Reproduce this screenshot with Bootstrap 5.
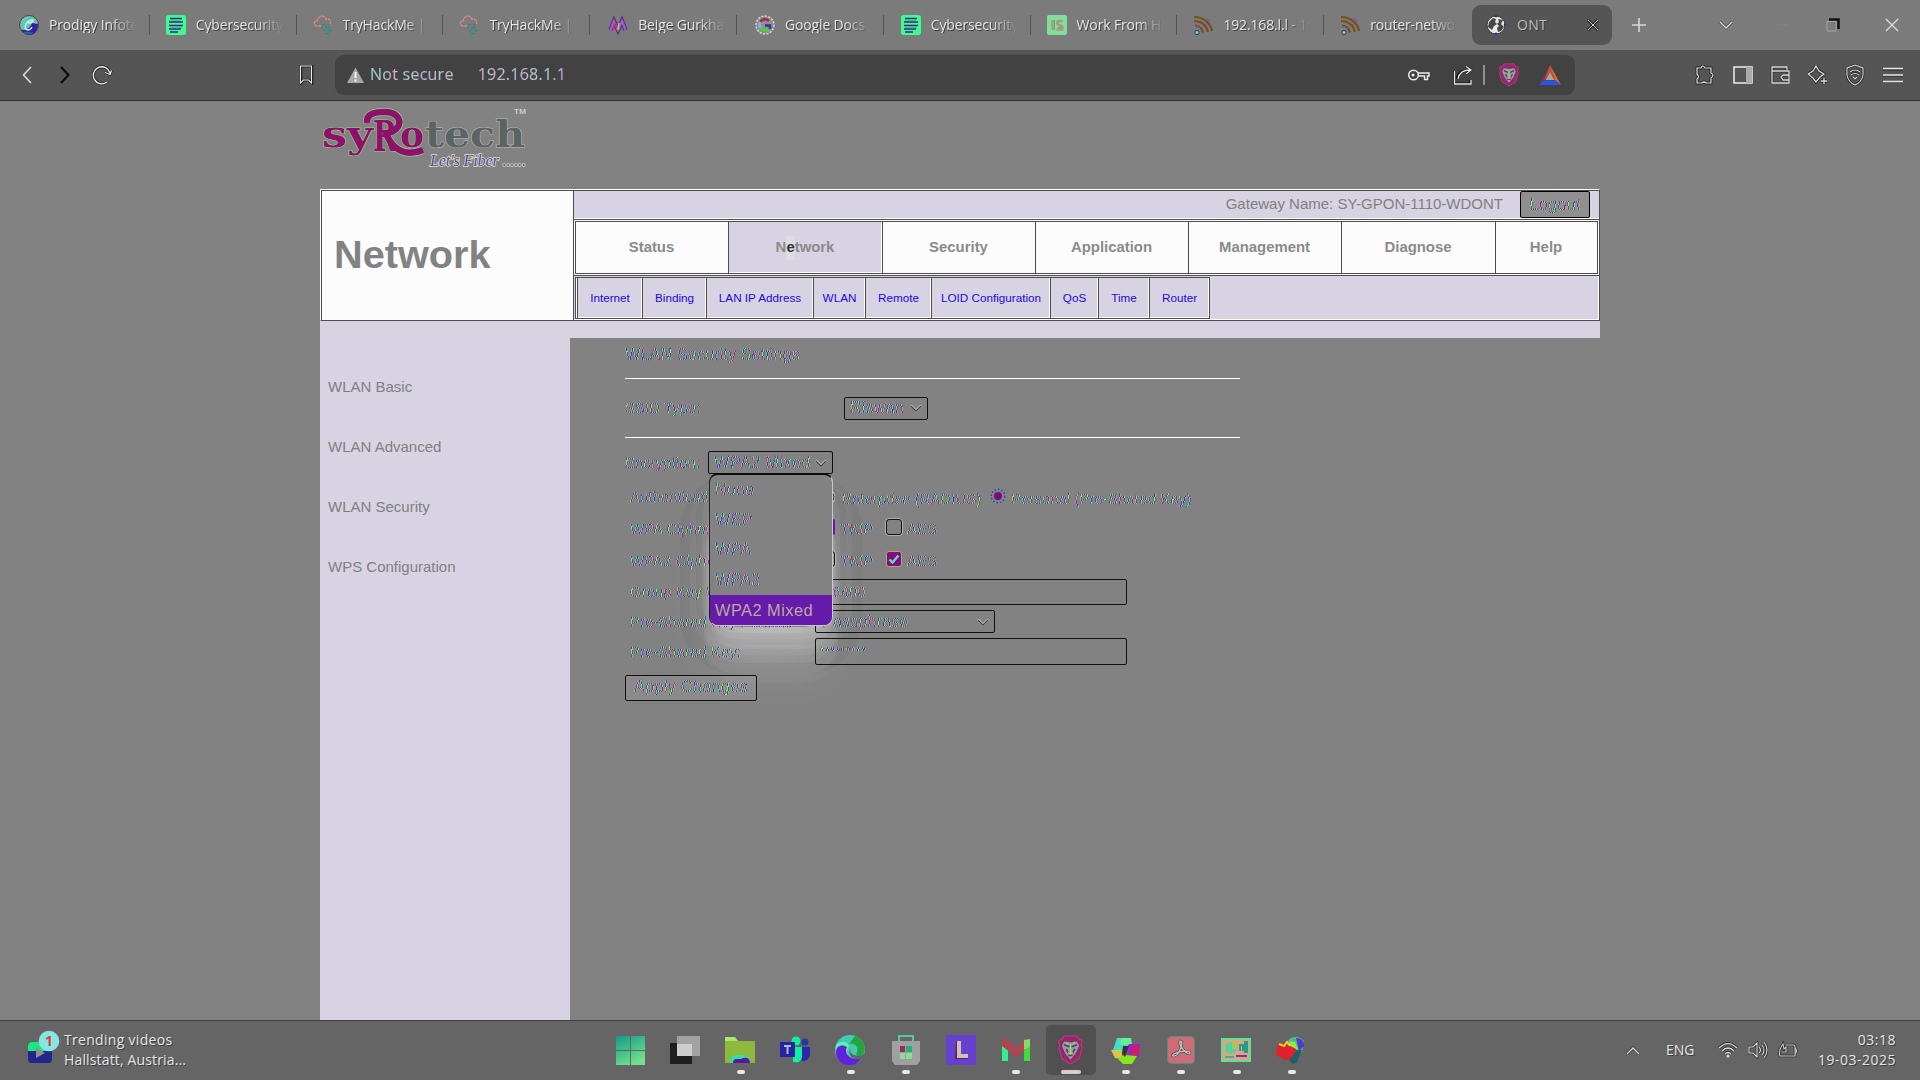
<!DOCTYPE html>
<html lang="en">
<head>
<meta charset="utf-8">
<title>ONT</title>
<link href="https://cdn.jsdelivr.net/npm/bootstrap@5.3.0/dist/css/bootstrap.min.css" rel="stylesheet">
<style>
:root{--bg:#828282;--lav:#d7d3e2;--ln:#4d4d4d}
body{width:1920px;height:1080px;overflow:hidden;background:var(--bg);font-family:"Liberation Sans",Arial,sans-serif;font-size:15px;line-height:1.2;color:#808080}
svg{display:block;flex:none}
.ui{font-family:"Open Sans","Noto Sans",sans-serif;color:#e6e6e6;text-shadow:1px 1px 0 #3c3c3c}
.tabs{height:50px;background:#7b7b7b;padding-left:3px}
.tab-i{width:146.8px;height:50px;padding-left:16px;gap:10px;flex:none;position:relative}
.tab-i::after{content:"";position:absolute;right:0;top:15px;width:1px;height:20px;background:#555}
.tab-i.last-i::after{display:none}
.tab-t{width:87px;overflow:hidden;white-space:nowrap;font-size:14px;letter-spacing:-.15px;-webkit-mask-image:linear-gradient(90deg,#000 68%,transparent)}
.tab-on{width:140px;height:40px;border-radius:9px;background:#555;padding:0 13px 0 14px;margin-left:1px}
.tools{height:50px;background:#555}
.urlbar{width:1240px;height:40px;border-radius:9px;background:#424242;margin-left:21px;padding:0 13px 0 12px}
.url-t{font-size:16px;letter-spacing:.25px;text-shadow:none;background:repeating-linear-gradient(90deg,#f09a9a 0 1px,#9ad0e8 1px 2px,#a9df9f 2px 3px,#a9a4ff 3px 4px);-webkit-background-clip:text;color:transparent;-webkit-text-stroke:.2px transparent}
.page{height:920px;border-top:1px solid #303030;padding-left:320px}
.w-page{width:1280px}
.hdr{height:132px;border:1px solid #fcfcfc;border-bottom:1px solid var(--ln);border-right:1px solid var(--ln)}
.ttl{width:253px;background:#fcfcfc;border:1px solid var(--ln);border-bottom:0;padding:0 0 1px 12px;font-size:39.7px;font-weight:700;color:#828282}
.top-r{height:29px;background:var(--lav);border-top:1px solid var(--ln);border-bottom:1px solid #fff}
.top-r .gw{margin-right:17px;padding-bottom:2px}
.lo{width:70px;height:27px;border:1px solid #000;border-radius:2px;background:#8f8f8f;margin-right:9px;font-size:16.6px}
.nav-r{height:57px;background:#fcfcfc;border:1px solid var(--ln);border-width:1px 0;padding:1px}
.nav-in{border:1px solid var(--ln);height:53px}
.nv{border-right:1px solid var(--ln);font-weight:700;font-size:14.9px;color:#8a8a8a;padding:1px 1px 0 0}
.nv:last-child{border-right:0}
.nv.act{background:var(--lav);box-shadow:inset -1px -1px #fff}
.hl{background:#dcdce2;color:#333;padding:3px 0}
.sub-r{height:44px;background:var(--lav);box-shadow:inset 0 -1px #fff,inset -1px 0 #fff;padding:1px 0 1px 1px}
.sub-in{background:#fff;border:1px solid var(--ln);padding-left:1px;height:42px}
.sb{border-right:1px solid var(--ln);background:var(--lav);box-shadow:inset -1px -1px #fff;font-size:11.7px;color:#2008e8}
.sb:first-child{border-left:1px solid var(--ln)}
.sb:last-child{border-right:0}
.band{height:17px;background:var(--lav)}
.side{width:250px;height:682px;background:var(--lav);padding:19px 8px}
.side div{height:60px;line-height:60px}
.form-a{padding-left:55px}
.iri{background:repeating-linear-gradient(104deg,#a8108c 0 1px,#36e6b4 1px 2px,#4c22c4 2px 3px,#aeea50 3px 4px,#0f7464 4px 5px,#e88ab0 5px 6px);-webkit-background-clip:text;background-clip:text;color:transparent;-webkit-text-stroke:.35px transparent;white-space:nowrap}
.big-t{font-size:16.4px}
.fr{display:flex;align-items:center;padding-left:5px}
.bx{border:1px solid #101010;border-radius:2px;display:flex;align-items:center;justify-content:space-between;padding:0 5px}
.lb{width:185px;flex:none}
.dd{position:absolute;left:1px;top:22px;width:124px;height:153px;background:#828282;border-radius:9px;border:1px solid #c9c9c9;border-top:2px solid #0c0c0c;border-left-color:#222;overflow:hidden;z-index:3}
.dd div{height:30px;line-height:29px;padding-left:5px}
.dd .sel{background:#651aab;color:#b9ab9e;height:32px;line-height:30px}
.glow{position:absolute;left:6px;top:42px;width:114px;height:134px;border-radius:24px;z-index:0;box-shadow:0 0 0 6px rgba(255,255,255,.08),0 0 0 12px rgba(255,255,255,.05),0 0 0 18px rgba(0,0,0,.025),0 4px 0 24px rgba(255,255,255,.035),0 14px 0 34px rgba(0,0,0,.03),0 18px 0 4px rgba(255,255,255,.07),0 28px 0 8px rgba(255,255,255,.05),0 38px 0 10px rgba(255,255,255,.05),0 48px 0 8px rgba(255,255,255,.03),0 20px 24px -4px rgba(255,255,255,.26),0 40px 50px 6px rgba(255,255,255,.12)}
.rel-z{position:relative;z-index:1}
.cb{width:16px;height:16px;border:1px solid #111;border-radius:3px;box-shadow:0 0 0 .5px #ddd}
.taskb{height:60px;background:#656565;border-top:1px solid #3e3e3e;padding-bottom:1px}
.ti{width:55.1px;height:58px;position:relative}
.ti.on::before{content:"";position:absolute;left:3px;top:4px;width:50px;height:50px;border-radius:5px;background:#505050}
.ti svg{position:relative}
.dot::after{content:"";position:absolute;left:24px;bottom:5px;width:8px;height:4px;border-radius:2px;background:#e8e8e8}
.ti.on::after{left:18px;width:20px;background:#d8cccc}
</style>
<script src="https://cdn.jsdelivr.net/npm/bootstrap@5.3.0/dist/js/bootstrap.bundle.min.js"></script>
</head>
<body>
<svg width="0" height="0" class="position-absolute"><defs>
<symbol id="doc" viewBox="0 0 20 20"><rect width="20" height="20" rx="2.5" fill="#3dfd8e"/><path d="M4 3.5h12M3 7h14M3 10.500h14M3 14h12M4 17h8" stroke="#35238e" stroke-width="1.3"/><path d="M4 5.200h11M4 12.300h12" stroke="#6f8f7c" stroke-width=".8"/></symbol>
<symbol id="thm" viewBox="0 0 20 20"><path d="M8 11H3.500C0 10 1 6 4 6 5 0 12 0 13 4c4-1 6 3 3.500 6" fill="none" stroke="#e88680" stroke-width="1.300" stroke-dasharray="3 .8"/><path d="M9 9.500h3M14 9.500h3M8 12.500h2M12 12.500h5M10 15.500h3M15 15.500h4M12 18.500h4" stroke="#2a8c8c" stroke-width="1.700"/></symbol>
<symbol id="rss" viewBox="0 0 20 20"><g fill="none" stroke="#77501b" stroke-width="2.200"><path d="M1 2c10 0 17 7 18 14"/><path d="M1 6c7 0 12 4 14 11"/><path d="M2 10.500c4 0 7 3 8 7"/></g><path d="M4 11l3 1M12 9l2 3M14 3l3 4" stroke="#7b3fd0" stroke-width="1"/><circle cx="4" cy="17.500" r="2.200" fill="#3fd080" stroke="#3030a0"/><circle cx="4" cy="17.500" r="1" fill="#e8c040"/></symbol>
<symbol id="lion" viewBox="0 0 24 28"><path d="M6 1h12l2 3 3 1-1 5 1 2-3 10-8 5-8-5L1 12l1-2-1-5 3-1z" fill="#93286f" stroke="#c23a78" stroke-width="1"/><path d="M6 6l6 1 6-1 2 4-3 7-5 6-5-6-3-7z" fill="#87a2a4"/><path d="M6 9l5 2M18 9l-5 2M8 13l2 4M16 13l-2 4M10 19h4" fill="none" stroke="#732b70" stroke-width="1.500"/><path d="M12 8v9M8 7l2 2M16 7l-2 2M10 16l2 2 2-2" fill="none" stroke="#b6d85c" stroke-width="1"/></symbol>
<symbol id="chev" viewBox="0 0 12 8"><path d="M1 1.500l5 5 5-5" fill="none" stroke="#ddd" stroke-width="2"/><path d="M1 2l5 5 5-5" fill="none" stroke="#444" stroke-width="1.400"/></symbol>
</defs></svg>

<header class="tabs d-flex align-items-center ui">
 <div class="tab-i d-flex align-items-center"><svg width="20" height="20" viewBox="0 0 20 20"><circle cx="10" cy="10" r="9.500" fill="#63c7b4" stroke="#54433e"/><path d="M2 14c4 3 9-1 11-6l6 1c0 14-14 13-17 5z" fill="#3420a0"/><path d="M4 17c4-1 8 1 11 0-3 3-8 3-11 0z" fill="#1e6f9e"/><path d="M13 5c-7 1-9 10-4 10 2 0 3-1 4-3M9 8c6 0 6-4 3-3" fill="none" stroke="#cfeee6" stroke-width="1.400"/></svg><span class="tab-t">Prodigy Infotech</span></div>
 <div class="tab-i d-flex align-items-center"><svg width="20" height="20"><use href="#doc"/></svg><span class="tab-t">Cybersecurity</span></div>
 <div class="tab-i d-flex align-items-center"><svg width="20" height="20"><use href="#thm"/></svg><span class="tab-t">TryHackMe |</span></div>
 <div class="tab-i d-flex align-items-center"><svg width="20" height="20"><use href="#thm"/></svg><span class="tab-t">TryHackMe | S</span></div>
 <div class="tab-i d-flex align-items-center" style="padding-left:18px"><svg width="20" height="20" viewBox="0 0 20 20"><path d="M2.500 15L6 6l4 9 4-9 3.500 9" fill="none" stroke="#5b2f6e" stroke-width="4.500"/><path d="M2.500 15L6 6l4 9 4-9 3.500 9" fill="none" stroke="#9a5be6" stroke-width="2.200"/><path d="M7 7l2 6M5 15l1-4" stroke="#e02b4c" stroke-width="1.500"/><path d="M10 15l1-7" stroke="#9be53c" stroke-width="1.500"/></svg><span class="tab-t">Beige Gurkha</span></div>
 <div class="tab-i d-flex align-items-center" style="padding-left:18px"><svg width="20" height="20" viewBox="0 0 20 20"><circle cx="10" cy="10" r="9" fill="#8f8f8f" stroke="#ddd" stroke-width="1.400" stroke-dasharray="2 1.500"/><g fill="none" stroke-width="2.600"><path d="M14 6C11 3 7 4 5.500 7" stroke="#9b2f52"/><path d="M5 7c-1 3 0 5 1 6" stroke="#7fb3e0"/><path d="M6 13c2 3 6 3 8 1" stroke="#3ddc20"/><path d="M15 14V10.500h-5" stroke="#4a26a8"/></g></svg><span class="tab-t">Google Docs</span></div>
 <div class="tab-i d-flex align-items-center" style="padding-left:17px"><svg width="20" height="20"><use href="#doc"/></svg><span class="tab-t">Cybersecurity</span></div>
 <div class="tab-i d-flex align-items-center"><svg width="20" height="20" viewBox="0 0 20 20"><rect width="20" height="20" rx="2" fill="#7fe09a"/><path d="M5.500 5v10M15.500 6H11q-2 3 1 4 5 1 3 4.500H9.500" fill="none" stroke="#b9907c" stroke-width="2.400"/><path d="M7.500 5v10M11 12.500h3" stroke="#3fb593" stroke-width="1"/></svg><span class="tab-t">Work From Home</span></div>
 <div class="tab-i d-flex align-items-center"><svg width="20" height="20"><use href="#rss"/></svg><span class="tab-t">192.168.l.l - 19</span></div>
 <div class="tab-i last-i d-flex align-items-center"><svg width="20" height="20"><use href="#rss"/></svg><span class="tab-t">router-network</span></div>
 <div class="tab-on d-flex align-items-center"><svg width="20" height="20" viewBox="0 0 20 20"><circle cx="10" cy="10" r="9" fill="#e8e8e4" stroke="#3a3a3a"/><path d="M3 7l4-4 3 1-1 3 2 2-3 2-2 4-4-3zM12 4l5 1-2 4 3 3-3 4-3 1-1-4 2-2-2-2 2-2z" fill="#454545"/><path d="M9 1.500h2M18.500 9v2M9 18.500h2" stroke="#2020e0" stroke-width="1.300"/></svg><span style="margin-left:11px;font-size:14px;letter-spacing:.3px;color:#bdbdbd">ONT</span><svg class="ms-auto" width="12" height="12" viewBox="0 0 12 12"><path d="M1 1l10 10M11 1L1 11" stroke="#222" stroke-width="2.600"/><path d="M1 1l10 10M11 1L1 11" stroke="#ccc" stroke-width="1"/></svg></div>
 <div class="d-flex align-items-center" style="margin-left:20px">
  <svg width="14" height="14" viewBox="0 0 14 14"><path d="M7 0v14M0 7h14" stroke="#d8d8d8" stroke-width="1.600"/></svg>
  <svg style="margin-left:73px" width="14" height="9" viewBox="0 0 14 9"><path d="M1 1l6 6 6-6" fill="none" stroke="#444" stroke-width="2.600"/><path d="M1 1l6 6 6-6" fill="none" stroke="#ddd" stroke-width="1.300"/></svg>
  <svg style="margin-left:43px" width="14" height="2"><path d="M0 1h14" stroke="#858585"/></svg>
  <svg style="margin-left:36px" width="14" height="14" viewBox="0 0 14 14"><path d="M3 1.500h9.500V11" fill="none" stroke="#111" stroke-width="2.500"/><path d="M1 3.500h9V13H1z" fill="none" stroke="#a6a6a6"/></svg>
  <svg style="margin-left:45px" width="14" height="14" viewBox="0 0 14 14"><path d="M1 1l12 12M13 1L1 13" stroke="#ddd" stroke-width="1.400"/></svg>
 </div>
</header>

<div class="tools d-flex align-items-center ui">
 <svg style="margin-left:22px" width="10" height="18" viewBox="0 0 10 18"><path d="M9 1L1.500 9 9 17" fill="none" stroke="#e0e0e0" stroke-width="1.500"/></svg>
 <svg style="margin-left:28px" width="10" height="18" viewBox="0 0 10 18"><path d="M1 1l7.500 8L1 17" fill="none" stroke="#0a0a0a" stroke-width="2"/></svg>
 <svg style="margin-left:22px" width="21" height="20" viewBox="0 0 21 20"><path d="M15 17A8.500 8.500 0 1 1 18 8M19.500 5.500L18 9.500l-5-2" fill="none" stroke="#222" stroke-width="2.800"/><path d="M15 17A8.500 8.500 0 1 1 18 8M19.500 5.500L18 9.500l-5-2" fill="none" stroke="#eee" stroke-width="1.300"/></svg>
 <svg style="margin-left:186px" width="15" height="20" viewBox="0 0 15 20"><path d="M2 1h11v17l-3-3H5l-3 3z" fill="none" stroke="#1c1c1c" stroke-width="2.600"/><path d="M1.500 1h11v17l-3-3h-5l-3 3z" fill="none" stroke="#e6e6e6" stroke-width="1.100"/></svg>
 <div class="urlbar d-flex align-items-center">
  <svg width="17" height="17" viewBox="0 0 17 17"><path d="M8.500.5L17 16H0z" fill="#a8a8a8"/><path d="M8.500 5v6M8.500 12.500v2" stroke="#fff" stroke-width="1.800"/></svg>
  <span class="url-t" style="margin-left:6px">Not secure</span><span class="url-t" style="margin-left:24px">192.168.1.1</span>
  <svg class="ms-auto" width="22" height="12" viewBox="0 0 22 12"><g fill="none" stroke="#eee" stroke-width="1.400"><circle cx="5.500" cy="6" r="4.800"/><path d="M10 4h11v3h-1.500v3.500h-3V7H10"/></g><circle cx="5" cy="6" r="1.500" fill="#eee"/></svg>
  <svg style="margin-left:23px" width="20" height="19" viewBox="0 0 20 19"><path d="M1 5v13h16v-4M4 13C5 7 9 4 17 4M13 .5l4.500 3.500L13 8" fill="none" stroke="#151515" stroke-width="2.800"/><path d="M1.500 5v13H18v-4M5 13c1-6 5-9 12-9M13 .5l5 3.500-5 4" fill="none" stroke="#e8e8e8" stroke-width="1.300"/></svg>
  <svg style="margin-left:10px" width="2" height="20"><path d="M1 0v20" stroke="#e0e0e0"/></svg>
  <svg style="margin-left:13px" width="22" height="24"><use href="#lion"/></svg>
  <svg style="margin:0 1px 0 19px" width="22" height="20" viewBox="0 0 22 20"><path d="M11 0L0 20l6-4z" fill="#8a2b5c"/><path d="M11 0l11 20-6-4z" fill="#ef6a1e"/><path d="M11 0L5 16l6-9 6 9z" fill="#c2542a"/><path d="M0 20l5-4.500h12L22 20z" fill="#2257e8"/><path d="M11 7l4.500 8h-9z" fill="#b0a2a0"/></svg>
 </div>
 <div class="d-flex align-items-center" style="margin-left:120px;gap:17.500px">
  <svg width="20" height="20" viewBox="0 0 20 20"><path d="M2 3h4q1.500-4 4 0h6v5q4 2 0 5v5h-5q-2-2-4 0H2v-4q3-2 0-5z" fill="none" stroke="#222" stroke-width="2.800"/><path d="M2 3h4q1.500-4 4 0h6v5q4 2 0 5v5h-5q-2-2-4 0H2v-4q3-2 0-5z" fill="none" stroke="#ddd" stroke-width="1.200"/></svg>
  <svg width="20" height="18" viewBox="0 0 20 18"><rect x="1" y="1" width="18" height="16" fill="none" stroke="#eee" stroke-width="1.500"/><path d="M13 1h6v16h-6z" fill="#aaa"/></svg>
  <svg width="20" height="18" viewBox="0 0 20 18"><path d="M17 4V1H2v16h17V5H2M19 9h-6l-2 2 2 3h6" fill="none" stroke="#222" stroke-width="2.600"/><path d="M17 4V1H2v16h17V5H2M19 9h-6l-2 2 2 3h6" fill="none" stroke="#ddd" stroke-width="1.300"/></svg>
  <svg width="20" height="20" viewBox="0 0 20 20"><path d="M8 1l3 5 5 3-4 3-4 5-3-4-5-4 5-3zM16 13v6M13 16h6" fill="none" stroke="#222" stroke-width="2.800"/><path d="M8 1l3 5 5 3-4 3-4 5-3-4-5-4 5-3zM16 13v6M13 16h6" fill="none" stroke="#ddd" stroke-width="1.300"/></svg>
  <svg width="20" height="22" viewBox="0 0 20 22"><path d="M10 1l8 3v7q-1 7-8 10-7-3-8-10V4zM5 8q5-4 10 0M6 11q4-3 8 0M8 13l2 2 2-2" fill="none" stroke="#222" stroke-width="2.400"/><path d="M10 1l8 3v7q-1 7-8 10-7-3-8-10V4zM5 8q5-4 10 0M6 11q4-3 8 0M8 13l2 2 2-2" fill="none" stroke="#ddd" stroke-width="1.100"/></svg>
  <svg width="20" height="16" viewBox="0 0 20 16"><path d="M0 3h20M0 9h20M0 16h20" stroke="#222"/><path d="M0 1.500h20M0 8h20M0 14.500h20" stroke="#e8e8e8" stroke-width="1.500"/></svg>
 </div>
</div>

<main class="page">
 <div class="w-page">
  <div style="height:88px">
   <svg width="212" height="88" viewBox="320 101 212 88">
    <g font-family="DejaVu Serif,serif" font-weight="700" fill="#900f6b" stroke="#8fd08c" stroke-width="1.200" paint-order="stroke">
     <text x="322" y="147" font-size="37" textLength="51" lengthAdjust="spacingAndGlyphs">sy</text>
     <path d="M367 123C366 113 376 112 385 112c14 0 18 11 11 17-4 3-7 4-10 4 5 14 17 25 37 17" fill="none" stroke="#8fd08c" stroke-width="8"/>
     <text x="373" y="151" font-size="42" textLength="24" lengthAdjust="spacingAndGlyphs">R</text>
     <text x="400" y="147" font-size="37" textLength="24" lengthAdjust="spacingAndGlyphs">o</text>
     <path d="M367 123C366 113 376 112 385 112c14 0 18 11 11 17-4 3-7 4-10 4 5 14 17 25 37 17" fill="none" stroke="#900f6b" stroke-width="6.600"/>
    </g>
    <text x="425" y="147" font-size="37" font-family="DejaVu Serif,serif" font-weight="700" fill="#5a6462" stroke="#bdbdbd" stroke-width="1" paint-order="stroke" textLength="100" lengthAdjust="spacingAndGlyphs">tech</text>
    <text x="514" y="114" font-size="8" font-family="Liberation Sans,sans-serif" fill="#e8e8e8" textLength="12">TM</text>
    <text x="430" y="166" font-size="16" font-style="italic" font-family="Liberation Serif,serif" fill="#4a48b8" stroke="#e4e4b4" stroke-width="1.400" paint-order="stroke" textLength="96">Let's Fiber ......</text>
   </svg>
  </div>
  <div class="hdr d-flex">
   <div class="ttl d-flex align-items-center">Network</div>
   <div class="flex-fill">
    <div class="top-r d-flex justify-content-end align-items-center"><span class="gw">Gateway Name: SY-GPON-1110-WDONT</span><div class="lo d-flex justify-content-center align-items-center"><span class="iri">Logout</span></div></div>
    <div class="nav-r"><div class="nav-in d-flex text-center">
     <div class="nv d-flex align-items-center justify-content-center" style="width:153px">Status</div>
     <div class="nv act d-flex align-items-center justify-content-center" style="width:154px">N<span class="hl">e</span>twork</div>
     <div class="nv d-flex align-items-center justify-content-center" style="width:153px">Security</div>
     <div class="nv d-flex align-items-center justify-content-center" style="width:153px">Application</div>
     <div class="nv d-flex align-items-center justify-content-center" style="width:153px">Management</div>
     <div class="nv d-flex align-items-center justify-content-center" style="width:154px">Diagnose</div>
     <div class="nv d-flex align-items-center justify-content-center flex-fill">Help</div>
    </div></div>
    <div class="sub-r d-flex"><div class="sub-in d-flex">
     <div class="sb d-flex align-items-center justify-content-center" style="width:66px">Internet</div>
     <div class="sb d-flex align-items-center justify-content-center" style="width:64px">Binding</div>
     <div class="sb d-flex align-items-center justify-content-center" style="width:107px">LAN IP Address</div>
     <div class="sb d-flex align-items-center justify-content-center" style="width:52px">WLAN</div>
     <div class="sb d-flex align-items-center justify-content-center" style="width:66px">Remote</div>
     <div class="sb d-flex align-items-center justify-content-center" style="width:119px">LOID Configuration</div>
     <div class="sb d-flex align-items-center justify-content-center" style="width:48px">QoS</div>
     <div class="sb d-flex align-items-center justify-content-center" style="width:51px">Time</div>
     <div class="sb d-flex align-items-center justify-content-center" style="width:59px">Router</div>
    </div></div>
   </div>
  </div>
  <div class="band"></div>
  <div class="d-flex align-items-start">
   <aside class="side"><div>WLAN Basic</div><div>WLAN Advanced</div><div>WLAN Security</div><div>WPS Configuration</div></aside>
   <section class="form-a">
    <div style="height:41px;width:615px;line-height:33px;border-bottom:1px solid #fff"><span class="iri big-t">WLAN Security Settings</span></div>
    <div class="d-flex align-items-center" style="height:59px;width:615px;border-bottom:1px solid #fff"><span class="iri" style="width:219px">SSID Type:</span><div class="bx" style="width:84px;height:23px"><span class="iri big-t">Riswan</span><svg width="12" height="8"><use href="#chev"/></svg></div></div>
    <div class="d-flex align-items-center" style="height:49px"><span class="iri rel-z" style="width:83px">Encryption:</span>
     <div class="position-relative"><div class="glow"></div><div class="bx rel-z" style="width:125px;height:23px"><span class="iri big-t" style="letter-spacing:.35px">WPA2 Mixed</span><svg width="12" height="8"><use href="#chev"/></svg></div>
      <div class="dd big-t"><div><span class="iri">None</span></div><div><span class="iri">WEP</span></div><div><span class="iri">WPA</span></div><div><span class="iri">WPA2</span></div><div class="sel" style="letter-spacing:.45px">WPA2 Mixed</div></div></div></div>
    <div class="fr rel-z" style="height:24px"><span class="iri lb pb-1">Authentication Mode:</span><svg width="16" height="16" viewBox="0 0 16 16" style="margin:-4px 7px 0 4px"><circle cx="8" cy="8" r="7" fill="none" stroke="#ddd" stroke-width="2.500"/><circle cx="8" cy="8" r="7" fill="none" stroke="#111"/></svg><span class="iri">Enterprise (RADIUS)</span><svg width="16" height="16" viewBox="0 0 16 16" style="margin:-6px 5px 0 9px"><circle cx="8" cy="8" r="6.800" fill="none" stroke="#3fc09a" stroke-width="1.800"/><circle cx="8" cy="8" r="6.800" fill="none" stroke="#8a1a88" stroke-width="1.500" stroke-dasharray="2 1.500"/><circle cx="8" cy="8" r="4" fill="#7a0a88"/></svg><span class="iri">Personal (Pre-Shared Key)</span></div>
    <div class="fr rel-z" style="height:36px"><span class="iri lb">WPA Cipher Suite:</span><svg width="20" height="16" style="margin:-5px 5px 0 0"><rect width="20" height="16" rx="2" fill="#6a16b8"/></svg><span class="iri" style="width:46px">TKIP</span><span class="cb" style="margin:-4px 5px 0 0"></span><span class="iri">AES</span></div>
    <div class="fr rel-z" style="height:28px"><span class="iri lb">WPA2 Cipher Suite:</span><span class="cb" style="margin:-5px 5px 0 4px"></span><span class="iri" style="width:46px">TKIP</span><svg width="16" height="16" viewBox="0 0 16 16" style="margin:-4px 5px 0 0"><rect x=".5" y=".5" width="15" height="15" rx="2.500" fill="#7a0f80" stroke="#c99a70"/><path d="M3.500 8.500l3 3 6-7" fill="none" stroke="#6fd8b0" stroke-width="2.400"/></svg><span class="iri">AES</span></div>
    <div class="fr rel-z" style="height:33px"><span class="iri lb">Group Key Update Timer:</span><div class="bx" style="width:312px;height:26px;padding-left:8px"><span class="iri">86400</span></div></div>
    <div class="fr rel-z" style="height:27px"><span class="iri lb">Pre-Shared Key Format:</span><div class="bx" style="width:180px;height:23px;padding-left:6px"><span class="iri big-t">Passphrase</span><svg width="12" height="8"><use href="#chev"/></svg></div></div>
    <div class="fr rel-z" style="height:33px"><span class="iri lb">Pre-Shared Key:</span><div class="bx" style="width:312px;height:27px;padding-left:4px"><span class="iri" style="font-size:13px;letter-spacing:.6px;margin-top:-3px">•••••••••</span></div></div>
    <div class="d-flex align-items-center rel-z" style="height:39px"><div class="bx justify-content-center" style="width:132px;height:26px;background:rgba(255,255,255,.08)"><span class="iri" style="font-size:16.800px">Apply Changes</span></div></div>
   </section>
  </div>
 </div>
</main>

<footer class="taskb d-flex align-items-center ui">
 <svg style="margin:-4px 0 0 27px" width="34" height="36" viewBox="0 0 34 36"><rect x="1" y="12" width="24" height="21" rx="4" fill="#22268a"/><path d="M1 21v-5q0-4 4-4h16q4 0 4 4v5z" fill="#18e884"/><path d="M9 17l9 6-9 5z" fill="#8f8f8f"/><circle cx="22" cy="11" r="10.300" fill="#86e6e2"/><text x="18" y="16" font-size="14" font-family="Noto Sans,sans-serif" font-weight="700" fill="#e03838" style="text-shadow:none">1</text></svg>
 <div style="margin-left:3px;width:538.500px;font-size:14px;line-height:20px"><div style="letter-spacing:.3px">Trending videos</div><div style="letter-spacing:.15px">Hallstatt, Austria...</div></div>
 <div class="d-flex">
  <div class="ti d-flex align-items-center justify-content-center"><svg width="29" height="29" viewBox="0 0 29 29"><defs><linearGradient id="wg" x2=".5" y2="1"><stop stop-color="#159a8a"/><stop offset="1" stop-color="#6fe08c"/></linearGradient></defs><path d="M0 0h14v14H0zM15 0h14v14H15zM0 15h14v14H0zM15 15h14v14H15z" fill="url(#wg)"/></svg></div>
  <div class="ti d-flex align-items-center justify-content-center"><svg width="30" height="28" viewBox="0 0 30 28"><path d="M0 7h22v21H0z" fill="#1e1e1e"/><path d="M7 0h23v20H7z" fill="#a2a2a2"/><path d="M7 8h15v12H7z" fill="#cdcdcd"/></svg></div>
  <div class="ti dot d-flex align-items-center justify-content-center"><svg width="30" height="28" viewBox="0 0 30 28"><path d="M0 1h10l3 4h17v22H0z" fill="#8dba3c"/><path d="M0 1h10l3 4H0z" fill="#a8e66c"/><path d="M5 27c0-9 6-8 10-8s10 0 10 8z" fill="#35dfa0"/><path d="M8 27c0-5 4-4 8-4 4-2 9-2 9 4z" fill="#5a14a8"/></svg></div>
  <div class="ti d-flex align-items-center justify-content-center"><svg width="30" height="28" viewBox="0 0 30 28"><circle cx="16" cy="5" r="4.500" fill="#10f0a0"/><circle cx="25" cy="6" r="3.500" fill="#2a35a8"/><path d="M18 11h12v8q-2 7-8 6z" fill="#2a26b0"/><path d="M13 11h9v10q-1 7-9 5z" fill="#10f0a0"/><path d="M0 6h15v15H0z" fill="#2124a8"/><path d="M4 10h7M7.500 10v8" stroke="#bbb" stroke-width="2"/></svg></div>
  <div class="ti dot d-flex align-items-center justify-content-center"><svg width="30" height="30" viewBox="0 0 30 30"><circle cx="15" cy="15" r="15" fill="#43cbb0"/><path d="M20 1c10 4 13 16 6 20-3 1-6-1-4-4 2-6-3-9-8-8z" fill="#24a53c"/><path d="M1 10c5-6 13-3 13 2-4 4-2 12 6 14-9 7-21-1-19-16z" fill="#5df0b8"/><path d="M1 17c0-7 7-8 11-5-4 7 5 15 15 11-8 13-26 7-26-6z" fill="#6220dc"/><path d="M16 12c-3 6 2 9 10 9l4-3v4l-3 2c-9 2-16-4-11-12z" fill="#656565"/></svg></div>
  <div class="ti dot d-flex align-items-center justify-content-center"><svg width="30" height="30" viewBox="0 0 30 30"><path d="M8 6V1h14v5" fill="none" stroke="#4fc9a0" stroke-width="2"/><path d="M1 6h28v20l-3 4H4l-3-4z" fill="#a0a0a0"/><path d="M9 11h5v6H9z" fill="#922f62"/><path d="M15 11h6v6h-6z" fill="#20b070"/><path d="M9 18h5v6H9zM15 18h6v6h-6z" fill="#8cdc98"/></svg></div>
  <div class="ti d-flex align-items-center justify-content-center"><svg width="30" height="30"><path d="M0 0h30v30H0z" fill="#6840d0"/><path d="M10 6h5v14h7v4H9z" fill="#4d2e4a"/><path d="M11 6h4v13h7v4H11z" fill="#d4bfb8"/></svg></div>
  <div class="ti dot d-flex align-items-center justify-content-center"><svg width="28" height="22" viewBox="0 0 28 22"><path d="M0 6h6v16H0z" fill="#34f08c"/><path d="M22 6h6v16h-6z" fill="#3fdc3c"/><path d="M0 0h5l9 9 9-9h5v7L14 18 0 7z" fill="#b04450"/><path d="M22 1l6-1v8l-6 3z" fill="#8ad868"/></svg></div>
  <div class="ti dot on d-flex align-items-center justify-content-center"><svg width="27" height="30"><use href="#lion"/></svg></div>
  <div class="ti dot d-flex align-items-center justify-content-center"><svg width="30" height="28" viewBox="0 0 30 28"><path d="M6 2h14l-6 15H1z" fill="#46dccb"/><path d="M10 2h10l1 6-12 1z" fill="#67ef96"/><path d="M18 8h11l-1 13-11-3z" fill="#a814e0"/><path d="M22 8l7 3-3 10-6-3z" fill="#cf1e66"/><path d="M0 14h10l2 9-8-1z" fill="#d8c646"/><path d="M12 19l14 1-5 8h-9l-5-5z" fill="#84e81c"/><path d="M12 10h6l-4 11-3-3z" fill="#3a3035"/></svg></div>
  <div class="ti dot d-flex align-items-center justify-content-center"><svg width="28" height="28"><rect x=".5" y=".5" width="27" height="27" rx="4" fill="#d06a74" stroke="#4f8f88"/><path d="M13 5c5 1-2 16-7 15-3-3 16-7 17-3-1 4-12-7-10-12z" fill="none" stroke="#2a5650" stroke-width="2.600"/><path d="M13 5c5 1-2 16-7 15-3-3 16-7 17-3-1 4-12-7-10-12z" fill="none" stroke="#d5bdb8" stroke-width="1.300"/></svg></div>
  <div class="ti dot d-flex align-items-center justify-content-center"><svg width="30" height="24"><path d="M1 1h28v22H1z" fill="#dca67f" stroke="#5fe096" stroke-width="2"/><path d="M11 4a6 6 0 1 0 5 7h-5z" fill="#4fd69d"/><path d="M12 3v6h6z" fill="#7ee03c"/><path d="M19 13V7h3v6M24 15V4h2v11" stroke="#2a9a8c" stroke-width="2" fill="none"/><path d="M4 19h9" stroke="#3cae9a" stroke-width="2"/><path d="M15 18h11" stroke="#8028c0" stroke-width="2"/></svg></div>
  <div class="ti dot d-flex align-items-center justify-content-center"><svg width="30" height="28"><path d="M12 4q8-7 16 1l-2 12-12-7z" fill="#4fb98c"/><path d="M20 2q8 0 8 8l-5 5z" fill="#5038d0"/><path d="M13 5l6 1 3 8-8-4z" fill="#96ea3a"/><path d="M1 9l7-2 12 6-1 10-10 1L0 19z" fill="#e0222c"/><path d="M13 24l8-10h5l-5 12-4 2z" fill="#205f6c"/><path d="M3 8l5 2 3-4 3 4" stroke="#efd030" stroke-width="2" fill="none"/></svg></div>
 </div>
 <div class="d-flex align-items-center ms-auto" style="padding-right:24px">
  <svg width="14" height="9" viewBox="0 0 14 9"><path d="M1 8l6-6 6 6" fill="none" stroke="#333" stroke-width="2.800"/><path d="M1 8l6-6 6 6" fill="none" stroke="#ddd" stroke-width="1.300"/></svg>
  <span style="margin-left:26px;font-size:14px;width:30px">ENG</span>
  <svg style="margin-left:22px" width="20" height="16" viewBox="0 0 20 16"><g fill="none" stroke="#2d2d2d" stroke-width="3"><path d="M1 6q9-9 18 0M4 9q6-6 12 0M7 12q3-3 6 0"/></g><g fill="none" stroke="#ddd" stroke-width="1.200"><path d="M1 6q9-9 18 0M4 9q6-6 12 0M7 12q3-3 6 0"/></g><circle cx="10" cy="14" r="1.500" fill="#ddd"/></svg>
  <svg style="margin-left:10px" width="20" height="18" viewBox="0 0 20 18"><path d="M1 6h4l4-4v14l-4-4H1zM11 6q3 3 0 6M14 4q4 5 0 10M16 1q6 8 0 16" fill="none" stroke="#2d2d2d" stroke-width="2.600"/><path d="M1 6h4l4-4v14l-4-4H1zM11 6q3 3 0 6M14 4q4 5 0 10M16 1q6 8 0 16" fill="none" stroke="#ddd" stroke-width="1.100"/></svg>
  <svg style="margin-left:9px" width="21" height="18" viewBox="0 0 21 18"><path d="M9 4h8q1 0 1 2v9H3q-2-5 3-12l1 5 2-2v5H5M18 7q3 3 0 6" fill="none" stroke="#2d2d2d" stroke-width="2.600"/><path d="M9 4h8q1 0 1 2v9H3q-2-5 3-12l1 5 2-2v5H5M18 7q3 3 0 6" fill="none" stroke="#ccc" stroke-width="1.100"/></svg>
  <div class="text-end" style="width:98px;font-size:14px;letter-spacing:.5px;line-height:20px">03:18<br>19-03-2025</div>
 </div>
</footer>
</body>
</html>
